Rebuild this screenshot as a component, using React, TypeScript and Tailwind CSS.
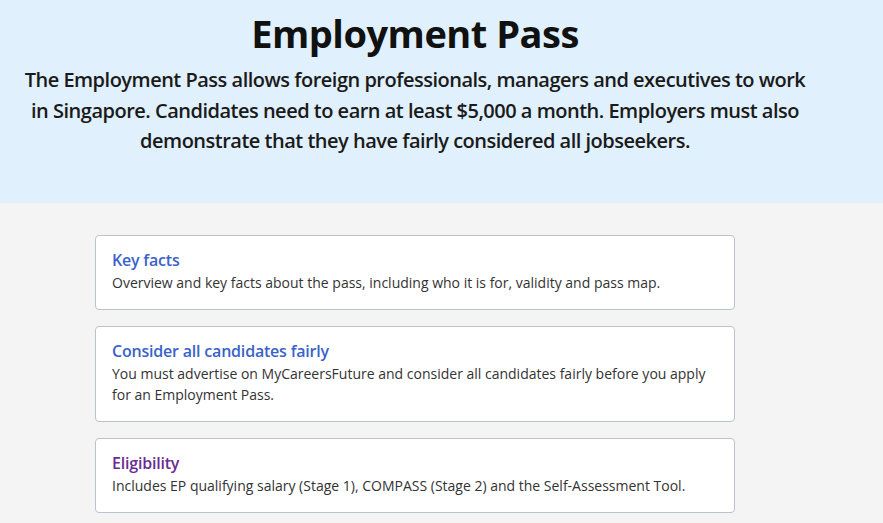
const CARDS: { title: string; body: string; visited?: boolean }[] = [
  {
    title: 'Key facts',
    body: 'Overview and key facts about the pass, including who it is for, validity and pass map.',
  },
  {
    title: 'Consider all candidates fairly',
    body: 'You must advertise on MyCareersFuture and consider all candidates fairly before you apply for an Employment Pass.',
  },
  {
    title: 'Eligibility',
    body: 'Includes EP qualifying salary (Stage 1), COMPASS (Stage 2) and the Self-Assessment Tool.',
    visited: true,
  },
];

export default function App() {
  return (
    <div className="min-h-[523px] bg-[#f4f4f4] font-['Open_Sans',sans-serif]">
      <header className="bg-[#e0f0fd] h-[203px] pt-[8px] pl-[20px]">
        <div className="w-[790px]">
          <h1 className="text-center text-[38px] leading-[50px] font-bold text-[#111] tracking-[-0.5px]">
            Employment Pass
          </h1>
          <p className="mt-[7px] text-center text-[20px] leading-[30.5px] font-semibold text-[#1a1a1a] tracking-[-0.5px]">
            The Employment Pass allows foreign professionals, managers and executives to work in Singapore. Candidates need to earn at least $5,000 a month. Employers must also demonstrate that they have fairly considered all jobseekers.
          </p>
        </div>
      </header>

      <main className="pt-[32px] pl-[95px] flex flex-col gap-[16px]">
        {CARDS.map((card) => (
          <a
            key={card.title}
            href="#"
            className="block w-[640px] rounded-[4px] border border-[#b9c3ce] bg-white px-[16px] pt-[13px] pb-[16px]"
          >
            <div
              className={`text-[16px] leading-[22px] font-semibold tracking-[-0.2px] ${
                card.visited ? 'text-[#6a2c91]' : 'text-[#3a63c9]'
              }`}
            >
              {card.title}
            </div>
            <p className="mt-[1px] text-[14px] leading-[21px] text-[#333]">{card.body}</p>
          </a>
        ))}
      </main>
    </div>
  );
}
